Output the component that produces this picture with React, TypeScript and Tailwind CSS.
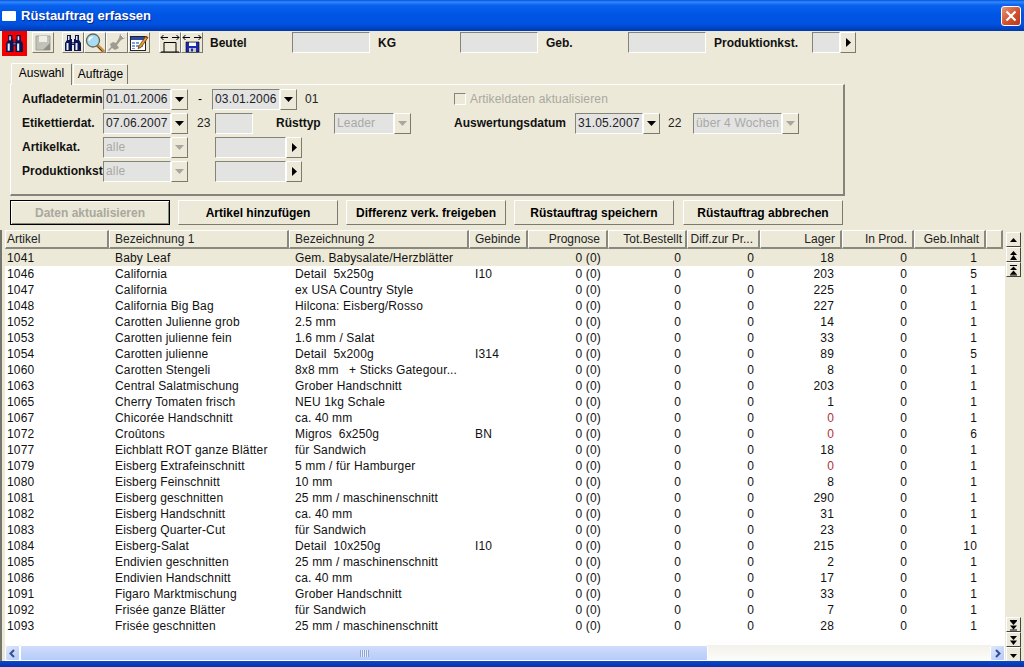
import React from "react";

const rows: [string, string, string, string, string, boolean, string][] = [
  ["1041", "Baby Leaf", "Gem. Babysalate/Herzblätter", "", "18", false, "1"],
  ["1046", "California", "Detail  5x250g", "I10", "203", false, "5"],
  ["1047", "California", "ex USA Country Style", "", "225", false, "1"],
  ["1048", "California Big Bag", "Hilcona: Eisberg/Rosso", "", "227", false, "1"],
  ["1052", "Carotten Julienne grob", "2.5 mm", "", "14", false, "1"],
  ["1053", "Carotten julienne fein", "1.6 mm / Salat", "", "33", false, "1"],
  ["1054", "Carotten julienne", "Detail  5x200g", "I314", "89", false, "5"],
  ["1060", "Carotten Stengeli", "8x8 mm   + Sticks Gategour...", "", "8", false, "1"],
  ["1063", "Central Salatmischung", "Grober Handschnitt", "", "203", false, "1"],
  ["1065", "Cherry Tomaten frisch", "NEU 1kg Schale", "", "1", false, "1"],
  ["1067", "Chicorée Handschnitt", "ca. 40 mm", "", "0", true, "1"],
  ["1072", "Croûtons", "Migros  6x250g", "BN", "0", true, "6"],
  ["1077", "Eichblatt ROT ganze Blätter", "für Sandwich", "", "18", false, "1"],
  ["1079", "Eisberg Extrafeinschnitt", "5 mm / für Hamburger", "", "0", true, "1"],
  ["1080", "Eisberg Feinschnitt", "10 mm", "", "8", false, "1"],
  ["1081", "Eisberg geschnitten", "25 mm / maschinenschnitt", "", "290", false, "1"],
  ["1082", "Eisberg Handschnitt", "ca. 40 mm", "", "31", false, "1"],
  ["1083", "Eisberg Quarter-Cut", "für Sandwich", "", "23", false, "1"],
  ["1084", "Eisberg-Salat", "Detail  10x250g", "I10", "215", false, "10"],
  ["1085", "Endivien geschnitten", "25 mm / maschinenschnitt", "", "2", false, "1"],
  ["1086", "Endivien Handschnitt", "ca. 40 mm", "", "17", false, "1"],
  ["1091", "Figaro Marktmischung", "Grober Handschnitt", "", "33", false, "1"],
  ["1092", "Frisée ganze Blätter", "für Sandwich", "", "7", false, "1"],
  ["1093", "Frisée geschnitten", "25 mm / maschinenschnitt", "", "28", false, "1"],
];

const raised = "bg-[#ece9d8] border border-t-white border-l-white border-r-[#7c7a6e] border-b-[#7c7a6e]";
const sunken = "border border-t-[#85847a] border-l-[#85847a] border-r-white border-b-white";
const gridCols = "grid grid-cols-[104px_180px_180px_59px_80px_79px_73px_82px_72px_72px_17px]";

function Down({ c = "#000" }: { c?: string }) {
  return (
    <svg width="9" height="5" viewBox="0 0 9 5">
      <path d="M0 0H9L4.5 5Z" fill={c} />
    </svg>
  );
}

function Field({ w, text, arrow, disabled }: { w: string; text?: string; arrow?: boolean; disabled?: boolean }) {
  return (
    <div className={`flex h-[21px] ${w}`}>
      <div className={`flex-1 min-w-0 bg-[#e3e3e2] pl-[2px] tracking-[0.15px] flex items-center whitespace-nowrap overflow-hidden ${sunken} ${disabled ? "text-[#a9a9a6]" : "text-[#222]"}`}>
        {text}
      </div>
      {arrow && (
        <div className={`w-[17px] h-[21px] flex items-center justify-center ${raised}`}>
          <Down c={disabled ? "#a9a89e" : "#000"} />
        </div>
      )}
    </div>
  );
}

function SideField({ w }: { w: string }) {
  return (
    <div className={`flex h-[21px] ${w}`}>
      <div className={`flex-1 bg-[#e3e3e2] ${sunken}`} />
      <div className={`w-[16px] flex items-center justify-center ${raised}`}>
        <svg width="5" height="9" viewBox="0 0 5 9">
          <path d="M0 0V9L5 4.5Z" fill="#000" />
        </svg>
      </div>
    </div>
  );
}

function Binoculars({ size = 20 }: { size?: number }) {
  return (
    <svg width={size} height={size} viewBox="0 0 20 20">
      <path d="M4 2h4v4h1v3h2V6h1V2h4v5l2 3v8h-7v-6H9v6H2v-8l2-3Z" fill="#0a1450" />
      <path d="M5 3h1.500v4H5zM13 3h1.500v4H13z" fill="#dfe6ff" />
      <path d="M3.500 10h2v7h-2zM12.500 10h2v7h-2z" fill="#e8edff" />
      <path d="M9 9.500h2v1.500H9z" fill="#6a79c8" />
    </svg>
  );
}

function Magnifier() {
  return (
    <svg width="20" height="20" viewBox="0 0 20 20">
      <path d="M12 12l6 6" stroke="#c09048" strokeWidth="3.500" strokeLinecap="round" />
      <path d="M12.500 13.500l5 5" stroke="#5c3a10" strokeWidth="1" />
      <circle cx="8" cy="7.500" r="6.500" fill="#a8dcf4" stroke="#6a6a58" strokeWidth="1.300" />
      <path d="M4 7.500a4.500 4.500 0 0 1 3.500-3.500" stroke="#fff" strokeWidth="1.500" fill="none" />
    </svg>
  );
}

function Stamp() {
  return (
    <svg width="20" height="20" viewBox="0 0 20 20">
      <path d="M13 1l5 4-4 2-4 5 2 3-4 2-3-2-3 3-1-1 3-3-1-3 3-2 3 1 3-5Z" fill="#9d9c92" />
      <path d="M14 2l3 3" stroke="#fff" strokeWidth="1" />
    </svg>
  );
}

function FormEdit() {
  return (
    <svg width="20" height="20" viewBox="0 0 20 20">
      <rect x="1.500" y="3.500" width="15" height="14" fill="#fff" stroke="#222" />
      <rect x="2" y="4" width="14" height="3" fill="#2c4aa8" />
      <path d="M3 9h3v2H3zM7 9h3v2H7zM3 12h3v2H3zM7 12h3v2H7zM11 12h3v2h-3zM3 15h3v1H3z" fill="#7d9ad8" />
      <path d="M10 13l7-10 2 1.500-7 10-3 1Z" fill="#e8a030" stroke="#5a3810" strokeWidth=".8" />
      <path d="M16.500 3.500l2 1.500" stroke="#d02020" strokeWidth="1.500" />
    </svg>
  );
}

function ArrowsTop() {
  return (
    <path d="M1 4.500h7M1 4.500l2.500-2.500M1 4.500l2.500 2.500M19 4.500h-7M19 4.500l-2.500-2.500M19 4.500l-2.500 2.500" stroke="#000" strokeWidth="1" fill="none" />
  );
}

function ArrowBox() {
  return (
    <svg width="20" height="20" viewBox="0 0 20 20">
      <ArrowsTop />
      <path d="M4 9.500h12M4 9.500V19M16 9.500V19M1 19h18" stroke="#000" fill="none" />
    </svg>
  );
}

function ArrowFloppy() {
  return (
    <svg width="20" height="20" viewBox="0 0 20 20">
      <ArrowsTop />
      <path d="M4 9h13v10H4z" fill="#1c2cb0" stroke="#000" strokeWidth=".6" />
      <rect x="7" y="9.500" width="7" height="3.500" fill="#fff" />
      <rect x="7" y="15" width="7" height="4" fill="#c8c8c8" />
      <rect x="9" y="15.500" width="2" height="3" fill="#1c2cb0" />
    </svg>
  );
}

function ToolBtn({ children, w = "w-[22px]" }: { children: React.ReactNode; w?: string }) {
  return <div className={`${w} h-[21px] flex items-center justify-center ${raised}`}>{children}</div>;
}

function Action({ label, ml, disabled }: { label: string; ml: string; disabled?: boolean }) {
  return (
    <div
      className={`w-[160px] ${ml} h-[25px] flex items-center justify-center font-bold ${
        disabled
          ? "bg-[#ece9d8] border border-black text-[#a9a89e] shadow-[inset_1px_1px_0_#fff,inset_-1px_-1px_0_#8a897e]"
          : `${raised} text-black`
      }`}
    >
      {label}
    </div>
  );
}

function Head({ children, cls = "pl-[5px]" }: { children?: React.ReactNode; cls?: string }) {
  return (
    <div className={`h-[19px] flex items-center bg-[#ece9d8] border-t border-l border-t-white border-l-white border-r-2 border-b-2 border-r-[#8a897e] border-b-[#8a897e] text-[#222] whitespace-nowrap overflow-hidden ${cls}`}>
      {children}
    </div>
  );
}

function Vbtn({ kind }: { kind: string }) {
  const p: Record<string, React.ReactNode> = {
    up: <path d="M1 8h7L4.500 4Z" fill="#000" />,
    up2: (
      <>
        <path d="M1 6h7L4.500 2Z" fill="#000" />
        <path d="M1 11h7L4.500 6Z" fill="#000" />
      </>
    ),
    top: (
      <>
        <path d="M1 1h7v1H1z" fill="#000" />
        <path d="M1 6h7L4.500 2.500Z" fill="#000" />
        <path d="M1 10.500h7L4.500 6.500Z" fill="#000" />
        <path d="M1 10.500h7v1H1z" fill="#000" />
      </>
    ),
    bottom: (
      <>
        <path d="M1 1h7v1H1z" fill="#000" />
        <path d="M1 2h7L4.500 6Z" fill="#000" />
        <path d="M1 6.500h7L4.500 10.500Z" fill="#000" />
        <path d="M1 10.500h7v1H1z" fill="#000" />
      </>
    ),
    down2: (
      <>
        <path d="M1 2h7L4.500 6Z" fill="#000" />
        <path d="M1 6.500h7L4.500 11Z" fill="#000" />
      </>
    ),
    down: <path d="M1 5h7L4.500 9Z" fill="#000" />,
  };
  return (
    <div className={`w-[15px] h-[15px] flex items-center justify-center ${raised} border-r-[#444] border-b-[#444]`}>
      <svg width="9" height="12" viewBox="0 0 9 12">
        {p[kind]}
      </svg>
    </div>
  );
}

function ScrollBtn({ d }: { d: string }) {
  return (
    <div className="w-[15px] h-[16px] rounded-[2px] bg-[linear-gradient(135deg,#dfe8fd,#b6caf8)] border border-white flex items-center justify-center">
      <svg width="9" height="9" viewBox="0 0 9 9">
        <path d={d} stroke="#33508f" strokeWidth="2" fill="none" />
      </svg>
    </div>
  );
}

export default function App() {
  return (
    <div
      className="w-[1024px] h-[667px] overflow-hidden bg-[#ece9d8] flex flex-col text-[12px] leading-none text-black"
      style={{ fontFamily: '"Liberation Sans", Arial, sans-serif' }}
    >
      {/* title */}
      <div className="h-[31px] shrink-0 flex items-center bg-[linear-gradient(180deg,#0a4fd8_0px,#2f8bff_2px,#0a62ee_5px,#0055e5_14px,#0052e0_24px,#0040c0_29px,#003aa8_31px)]">
        <div className="w-[14px] h-[10px] ml-[2px] bg-white rounded-[1px]" />
        <div className="ml-[5px] text-white font-bold text-[13px] [text-shadow:1px_1px_0_#0a2a90]">Rüstauftrag erfassen</div>
        <div className="ml-auto mr-[3px] w-[20px] h-[20px] rounded-[3px] border border-white bg-[linear-gradient(135deg,#e89478,#d0502c_55%,#b83a1c)] flex items-center justify-center">
          <svg width="12" height="12" viewBox="0 0 12 12">
            <path d="M1.500 1.500l9 9M10.500 1.500l-9 9" stroke="#fff" strokeWidth="2.200" />
          </svg>
        </div>
      </div>

      {/* toolbar */}
      <div className="h-[25px] shrink-0 flex items-center pl-[2px] pb-[2px]">
        <div className="self-start w-[25px] h-[25px] bg-[#f00000] flex items-center justify-center">
          <Binoculars size={21} />
        </div>
        <div className={`ml-[5px] w-[22px] h-[21px] flex items-center justify-center ${raised}`}>
          <svg width="16" height="16" viewBox="0 0 16 16">
            <path d="M1 1h14v14H1z" fill="#c3c2b8" stroke="#a3a298" />
            <path d="M4 1h8v6H4z" fill="#efeee6" />
            <path d="M8 15l7-7v7z" fill="#8f8e84" />
          </svg>
        </div>
        <div className="ml-[8px] flex">
          <ToolBtn><Binoculars /></ToolBtn>
          <ToolBtn><Magnifier /></ToolBtn>
          <ToolBtn><Stamp /></ToolBtn>
          <ToolBtn><FormEdit /></ToolBtn>
        </div>
        <div className="ml-[9px] flex">
          <ToolBtn><ArrowBox /></ToolBtn>
          <ToolBtn><ArrowFloppy /></ToolBtn>
        </div>
        <div className="ml-[7px] w-[82px] font-bold text-[#111]">Beutel</div>
        <div className="w-[78px]"><Field w="w-[78px]" /></div>
        <div className="ml-[8px] w-[82px] font-bold text-[#111]">KG</div>
        <div className="w-[78px]"><Field w="w-[78px]" /></div>
        <div className="ml-[8px] w-[82px] font-bold text-[#111]">Geb.</div>
        <div className="w-[78px]"><Field w="w-[78px]" /></div>
        <div className="ml-[8px] w-[98px] font-bold text-[#111]">Produktionkst.</div>
        <SideField w="w-[44px]" />
      </div>

      {/* tabs */}
      <div className="h-[22px] mt-[6px] shrink-0 flex items-end pl-[11px] relative z-10">
        <div className="w-[61px] h-[22px] -mb-[1px] pb-[3px] bg-[#ece9d8] border-t border-l border-t-white border-l-white border-r border-r-[#7c7a6e] flex items-center justify-center rounded-t-[2px]">Auswahl</div>
        <div className="w-[55px] h-[20px] ml-[1px] pb-[1px] bg-[#ece9d8] border-t border-l border-t-white border-l-white border-r border-r-[#7c7a6e] flex items-center justify-center rounded-t-[2px]">Aufträge</div>
      </div>

      {/* panel */}
      <div className="ml-[10px] w-[835px] h-[112px] shrink-0 border border-t-white border-l-white border-r-[#85847a] border-b-[#85847a] border-r-2 border-b-2 pt-[2px] pl-[11px] flex flex-col">
        <div className="h-6 flex items-center">
          <div className="w-[81px] font-bold text-[#111] whitespace-nowrap">Aufladetermin</div>
          <Field w="w-[85px]" text="01.01.2006" arrow />
          <div className="w-[24px] text-center">-</div>
          <Field w="w-[85px]" text="03.01.2006" arrow />
          <div className="ml-[8px] w-[149px] text-[#222]">01</div>
          <div className={`w-[12px] h-[12px] bg-[#ece9d8] ${sunken}`} />
          <div className="ml-[4px] tracking-[0.15px] text-[#a9a89e]">Artikeldaten aktualisieren</div>
        </div>
        <div className="h-6 flex items-center">
          <div className="w-[81px] font-bold text-[#111] whitespace-nowrap">Etikettierdat.</div>
          <Field w="w-[85px]" text="07.06.2007" arrow />
          <div className="ml-[9px] w-[18px] text-[#222]">23</div>
          <Field w="w-[38px]" />
          <div className="ml-[23px] w-[58px] font-bold text-[#111]">Rüsttyp</div>
          <Field w="w-[77px]" text="Leader" arrow disabled />
          <div className="ml-[43px] w-[121px] font-bold text-[#111] whitespace-nowrap">Auswertungsdatum</div>
          <Field w="w-[85px]" text="31.05.2007" arrow />
          <div className="ml-[8px] w-[25px] text-[#222]">22</div>
          <Field w="w-[106px]" text="über 4 Wochen" arrow disabled />
        </div>
        <div className="h-6 flex items-center">
          <div className="w-[81px] font-bold text-[#111]">Artikelkat.</div>
          <Field w="w-[85px]" text="alle" arrow disabled />
          <div className="w-[27px]" />
          <SideField w="w-[87px]" />
        </div>
        <div className="h-6 flex items-center">
          <div className="w-[81px] font-bold text-[#111] whitespace-nowrap">Produktionkst</div>
          <Field w="w-[85px]" text="alle" arrow disabled />
          <div className="w-[27px]" />
          <SideField w="w-[87px]" />
        </div>
      </div>

      {/* action buttons */}
      <div className="h-[25px] mt-[4px] shrink-0 flex pl-[10px]">
        <Action label="Daten aktualisieren" ml="ml-0" disabled />
        <Action label="Artikel hinzufügen" ml="ml-[8px]" />
        <Action label="Differenz verk. freigeben" ml="ml-[8px]" />
        <Action label="Rüstauftrag speichern" ml="ml-[8px]" />
        <Action label="Rüstauftrag abbrechen" ml="ml-[9px]" />
      </div>

      {/* table area */}
      <div className="mt-[5px] flex-1 min-h-0 flex border-l-2 border-l-[#77766c] pl-[3px]">
        <div className="w-[1000px] flex flex-col">
          <div className={gridCols}>
            <Head cls="pl-[1px]">Artikel</Head>
            <Head>Bezeichnung 1</Head>
            <Head>Bezeichnung 2</Head>
            <Head>Gebinde</Head>
            <Head cls="justify-end pr-[6px]">Prognose</Head>
            <Head cls="justify-end pr-[3px]">Tot.Bestellt</Head>
            <Head cls="justify-end pr-[5px]">Diff.zur Pr...</Head>
            <Head cls="justify-end pr-[5px]">Lager</Head>
            <Head cls="justify-end pr-[5px]">In Prod.</Head>
            <Head cls="justify-end pr-[5px]">Geb.Inhalt</Head>
            <Head />
          </div>
          <div className="mt-[1px] bg-white h-[396px] overflow-hidden">
            {rows.map((r, i) => (
              <div key={r[0]} className={`${gridCols} h-4 items-center text-[#111] whitespace-pre tracking-[0.15px] ${i === 0 ? "bg-[#ece9d8]" : "bg-white"}`}>
                <div className="pl-[2px]">{r[0]}</div>
                <div className="pl-[6px]">{r[1]}</div>
                <div className="pl-[6px]">{r[2]}</div>
                <div className="pl-[6px]">{r[3]}</div>
                <div className="text-right pr-[7px]">0 (0)</div>
                <div className="text-right pr-[6px]">0</div>
                <div className="text-right pr-[6px]">0</div>
                <div className={`text-right pr-[8px] ${r[5] ? "text-[#b5303a]" : ""}`}>{r[4]}</div>
                <div className="text-right pr-[7px]">0</div>
                <div className="text-right pr-[9px]">{r[6]}</div>
                <div />
              </div>
            ))}
          </div>
          <div className="h-[16px] flex bg-[linear-gradient(180deg,#f3f1ea,#fdfdfa)]">
            <ScrollBtn d="M6 1L2.500 4.500L6 8" />
            <div className="w-[688px] rounded-[2px] border border-white bg-[linear-gradient(180deg,#cfdcfc,#b7ccf9)] flex items-center justify-center">
              <div className="w-[9px] h-[7px] bg-[repeating-linear-gradient(90deg,#8ea6dc_0,#8ea6dc_1px,#e8eefe_1px,#e8eefe_2px)]" />
            </div>
            <div className="flex-1" />
            <ScrollBtn d="M3 1L6.500 4.500L3 8" />
          </div>
        </div>
        <div className="ml-[1px] w-[15px] h-[432px] flex flex-col">
          <div className="h-[2px]" />
          <Vbtn kind="up" />
          <Vbtn kind="up2" />
          <Vbtn kind="top" />
          <div className="flex-1" />
          <Vbtn kind="bottom" />
          <Vbtn kind="down2" />
          <Vbtn kind="down" />
        </div>
      </div>

      {/* bottom frame */}
      <div className="h-[6px] shrink-0 bg-[linear-gradient(180deg,#0a48c8,#0a32a8)]" />
    </div>
  );
}
